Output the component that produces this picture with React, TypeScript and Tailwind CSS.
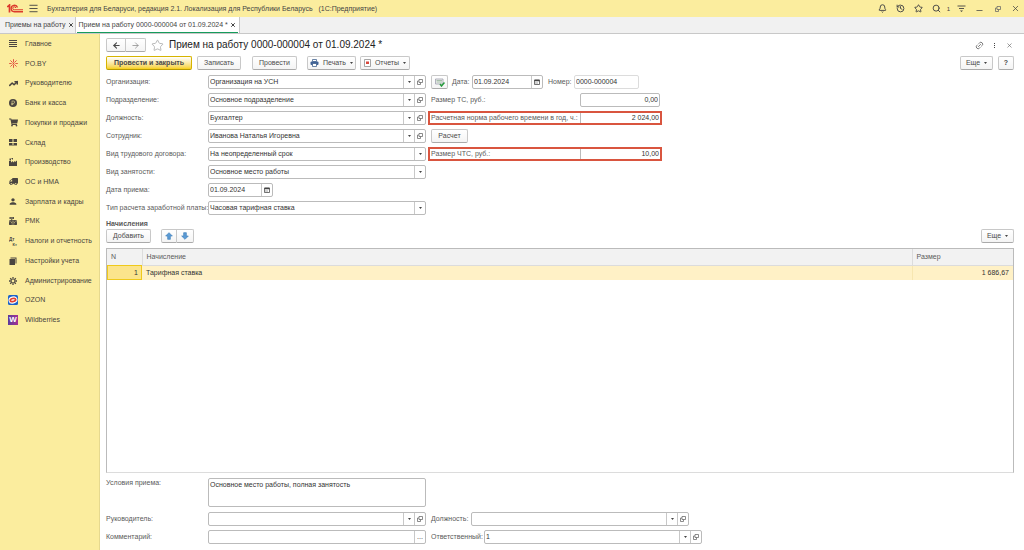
import type { ReactNode } from 'react'
import { Bell, History, Link2, Menu, Search, Star, X, ArrowLeft, ArrowRight, TrendingUp, Minus } from 'lucide-react'
import { FaCashRegister, FaShoppingCart, FaTruck } from 'react-icons/fa'
import { MdCurrencyRuble, MdPerson } from 'react-icons/md'
import clsx from 'clsx'

const menu: { title: string; icon: ReactNode }[] = [
  { title: 'Главное', icon: <LinesIcon /> },
  { title: 'PO.BY', icon: <BurstIcon /> },
  { title: 'Руководителю', icon: <TrendingUp className="size-[9px]" strokeWidth={4} /> },
  {
    title: 'Банк и касса',
    icon: (
      <span className="flex size-2 items-center justify-center rounded-full bg-[#4a4540]">
        <MdCurrencyRuble className="size-[6px] text-[#fbed9e]" />
      </span>
    ),
  },
  { title: 'Покупки и продажи', icon: <FaShoppingCart className="size-[9px]" /> },
  { title: 'Склад', icon: <StockIcon /> },
  { title: 'Производство', icon: <FactoryIcon /> },
  { title: 'ОС и НМА', icon: <FaTruck className="size-[9px] -scale-x-100" /> },
  { title: 'Зарплата и кадры', icon: <MdPerson className="size-[11px]" /> },
  { title: 'РМК', icon: <FaCashRegister className="size-2" /> },
  { title: 'Налоги и отчетность', icon: <DebitCreditIcon /> },
  { title: 'Настройки учета', icon: <BooksIcon /> },
  { title: 'Администрирование', icon: <GearIcon /> },
  { title: 'OZON', icon: <OzonIcon /> },
  { title: 'Wildberries', icon: <WildberriesIcon /> },
]

function LinesIcon() {
  return (
    <svg viewBox="0 0 8 8" className="size-2" fill="currentColor">
      <path d="M0 0h8v1H0zM0 2h8v1H0zM0 4h8v1H0zM0 6h8v1H0z" />
    </svg>
  )
}

function BurstIcon() {
  return (
    <svg viewBox="0 0 16 16" className="size-[9px]" stroke="#e0453a" strokeWidth="1.6" strokeLinecap="round">
      <path d="M8 1v4M8 11v4M1 8h3M12 8h3M3 3l3 3M10 10l3 3M13 3l-3 3M6 10l-3 3" />
      <circle cx="8" cy="8" r="1.2" fill="#e0453a" stroke="none" />
    </svg>
  )
}

function StockIcon() {
  return (
    <svg viewBox="0 0 16 14" className="h-[7px] w-2" fill="currentColor">
      <path d="M0 0h7v6H0zM9 0h7v6H9zM0 8h7v4H0zM9 8h7v4H9zM0 13h16v1H0z" />
    </svg>
  )
}

function FactoryIcon() {
  return (
    <svg viewBox="0 0 16 16" className="size-2" fill="currentColor">
      <path d="M0 16V6h4v3l4-3v3l4-3v2l4-3v11zM1 1h3v4H1zM5 0h3v2H5zM6 3h2v1H6z" />
    </svg>
  )
}

function DebitCreditIcon() {
  return (
    <svg viewBox="0 0 18 18" className="size-[9px]" fill="currentColor">
      <text x="0" y="8" fontSize="9" fontWeight="700">Дт</text>
      <text x="7" y="17" fontSize="8" fontWeight="700">Кт</text>
    </svg>
  )
}

function BooksIcon() {
  return (
    <svg viewBox="0 0 16 16" className="size-2" fill="currentColor">
      <path d="M1 4h11v12H1zM3 1h12v12h-2V3H3z" />
    </svg>
  )
}

function GearIcon() {
  return (
    <svg viewBox="0 0 16 16" className="size-2" fill="none" stroke="currentColor">
      <circle cx="8" cy="8" r="4" strokeWidth="2.4" />
      <path strokeWidth="2.6" d="M8 0v3M8 13v3M0 8h3M13 8h3M2.4 2.4l2 2M11.6 11.6l2 2M13.6 2.4l-2 2M4.4 11.6l-2 2" />
    </svg>
  )
}

function OzonIcon() {
  return (
    <svg viewBox="0 0 20 20" className="size-[10px]">
      <rect width="20" height="20" rx="3" fill="#1c62c9" />
      <ellipse cx="10" cy="10" rx="9" ry="7" fill="#fff" transform="rotate(-15 10 10)" />
      <ellipse cx="10" cy="10" rx="5.5" ry="3" fill="none" stroke="#e2402f" strokeWidth="3.4" transform="rotate(-15 10 10)" />
    </svg>
  )
}

function WildberriesIcon() {
  return (
    <span className="flex size-[10px] items-center justify-center bg-linear-to-r from-[#5b3a9c] to-[#a52f93] text-[8px] font-bold text-white">
      W
    </span>
  )
}

function Logo() {
  return (
    <svg viewBox="0 0 32 18" className="h-[9px] w-4" fill="none" stroke="#dc3a2c">
      <path d="M0 5h2l3-3v15" strokeWidth="3.4" />
      <path d="M21 7a6.5 6.5 0 1 0-6.5 8.500H32" strokeWidth="2.8" />
      <path d="M17.500 8a3 3 0 1 0-3 3.500H32" strokeWidth="2" />
    </svg>
  )
}

function PrinterIcon() {
  return (
    <svg viewBox="0 0 18 16" className="h-2 w-[9px]">
      <path d="M5 1h8v4H5z" fill="#fff" stroke="#3b5c8a" strokeWidth="1.500" />
      <rect x="1" y="5" width="16" height="7" rx="2" fill="#3f6296" />
      <path d="M5 9h8v6H5z" fill="#fff" stroke="#3b5c8a" strokeWidth="1.500" />
    </svg>
  )
}

function ReportIcon() {
  return (
    <svg viewBox="0 0 14 16" className="h-2 w-[7px]">
      <path d="M1 1h12v14H1z" fill="#fff" stroke="#888" strokeWidth="1.500" />
      <path d="M4 5h6v5H4z" fill="#d8473c" />
    </svg>
  )
}

function PostedIcon() {
  return (
    <svg viewBox="0 0 20 18" className="h-[9px] w-[10px]">
      <path d="M1 2h15v10H1z" fill="#eef0ee" stroke="#99a" strokeWidth="1.500" />
      <path d="M3 5h11M3 8h11" stroke="#8fae93" strokeWidth="1.500" />
      <path d="M10 12l3 4 6-7" fill="none" stroke="#259b3c" strokeWidth="3" />
    </svg>
  )
}

function CalendarIcon() {
  return (
    <svg viewBox="0 0 12 12" className="size-[6px]" fill="none" stroke="#444">
      <path d="M1 2h10v9H1z" strokeWidth="1.500" />
      <path d="M1 3h10" strokeWidth="3" />
      <path d="M3 7h6M3 9h6" strokeDasharray="1 1" />
    </svg>
  )
}

function OpenIcon() {
  return (
    <svg viewBox="0 0 12 12" className="size-[6px]" fill="none" stroke="#666" strokeWidth="1.500">
      <path d="M4 1h7v6H4zM4 4H1v7h6V7" />
    </svg>
  )
}

function MoveArrow({ down }: { down?: boolean }) {
  return (
    <svg viewBox="0 0 12 12" className={clsx('size-2', down && 'rotate-180')}>
      <path d="M6 1l5 5H8v5H4V6H1z" fill="#5b9bd5" stroke="#3f80bb" />
    </svg>
  )
}

function Caret() {
  return (
    <svg viewBox="0 0 6 4" className="h-[2px] w-[3px] shrink-0" fill="#444">
      <path d="M0 0h6L3 4z" />
    </svg>
  )
}

function Button({ children, className, label }: { children: ReactNode; className?: string; label?: string }) {
  return (
    <button
      type="button"
      aria-label={label}
      className={clsx(
        'flex h-[14px] shrink-0 items-center justify-center gap-1 rounded-[2px] border border-[#c8c8c8] border-b-[#aaaaaa] bg-linear-to-b from-white to-[#f4f4f4] text-[#4a4a4a]',
        className,
      )}
    >
      {children}
    </button>
  )
}

const box = 'flex h-[14px] shrink-0 overflow-hidden rounded-[2px] border border-[#bbbbbb] bg-white text-[#333]'
const cell = 'flex w-[11px] shrink-0 items-center justify-center border-l border-[#c8c8c8]'

function Combo({ id, value, open, className }: { id: string; value: string; open?: boolean; className?: string }) {
  return (
    <div className={clsx(box, className)}>
      <div className="relative min-w-0 flex-1">
        <select id={id} defaultValue={value} className="block h-full w-full appearance-none pl-px outline-none">
          <option value={value}>{value}</option>
        </select>
        <span className={clsx(cell, 'pointer-events-none absolute inset-y-0 right-0')}>
          <Caret />
        </span>
      </div>
      {open && (
        <button type="button" aria-label="Открыть" className={cell}>
          <OpenIcon />
        </button>
      )}
    </div>
  )
}

function DateInput({ id, className }: { id: string; className?: string }) {
  return (
    <div className={clsx(box, className)}>
      <input id={id} defaultValue="01.09.2024" className="min-w-0 flex-1 pl-px outline-none" />
      <button type="button" aria-label="Выбрать дату" className={cell}>
        <CalendarIcon />
      </button>
    </div>
  )
}

function Row({ id, label, children }: { id: string; label: string; children: ReactNode }) {
  return (
    <div className="flex h-[14px] items-center">
      <label htmlFor={id} className="w-[102px] shrink-0 whitespace-nowrap">{label}</label>
      {children}
    </div>
  )
}

function Amount({ id, label, value, marked }: { id: string; label: string; value: string; marked?: boolean }) {
  return (
    <div
      className={clsx(
        '-ml-[3px] flex h-[14px] w-[234px] items-center border-2 pl-px',
        marked ? 'border-[#d9553f]' : 'border-transparent',
      )}
    >
      <label htmlFor={id} className="flex-1 whitespace-nowrap">{label}</label>
      <input
        id={id}
        defaultValue={value}
        className={clsx(
          'w-20 shrink-0 border-[#bbbbbb] pr-px text-right text-[#333] outline-none',
          marked ? 'h-[10px] border-l' : 'h-[14px] rounded-[2px] border pb-px',
        )}
      />
    </div>
  )
}

function TitleBar() {
  return (
    <header className="flex h-[17px] items-center bg-[#fbed9e] pr-1 pl-[7px] text-[#444]">
      <Logo />
      <button type="button" aria-label="Меню" className="ml-[5px]">
        <Menu className="size-[11px]" strokeWidth={2} />
      </button>
      <h1 className="ml-2 flex-1 whitespace-pre">
        Бухгалтерия для Беларуси, редакция 2.1. Локализация для Республики Беларусь   (1С:Предприятие)
      </h1>
      <div className="flex items-center gap-[9px]">
        <button type="button" aria-label="Уведомления"><Bell className="size-[9px]" strokeWidth={2.5} /></button>
        <button type="button" aria-label="История"><History className="size-[9px]" strokeWidth={2.5} /></button>
        <button type="button" aria-label="Избранное"><Star className="size-[9px]" strokeWidth={2.5} /></button>
        <button type="button" aria-label="Поиск"><Search className="size-[9px]" strokeWidth={2.5} /></button>
      </div>
      <span className="ml-[6px] text-[6px]">1</span>
      <button type="button" aria-label="Настройки" className="ml-[7px]">
        <svg viewBox="0 0 18 18" className="size-[9px]" fill="none" stroke="currentColor" strokeWidth="1.800">
          <path d="M1 4h16M4 9h10" />
          <path d="M6 13h6l-3 3z" fill="currentColor" stroke="none" />
        </svg>
      </button>
      <div className="ml-[9px] flex items-center gap-[9px]">
        <button type="button" aria-label="Свернуть"><Minus className="size-[9px] translate-y-[2px]" /></button>
        <button type="button" aria-label="Развернуть" className="flex size-[9px] items-center justify-center"><OpenIcon /></button>
        <button type="button" aria-label="Закрыть"><X className="size-[9px]" /></button>
      </div>
    </header>
  )
}

function Tabs() {
  return (
    <nav className="flex h-[17px] border-b border-[#c8c8c8] bg-[#f1f1f1] text-[#444]">
      <div className="flex items-center gap-[2px] border-r border-[#c8c8c8] pr-px pl-[5px]">
        <a href="#list">Приемы на работу</a>
        <button type="button" aria-label="Закрыть"><X className="size-[6px]" strokeWidth={4} /></button>
      </div>
      <div className="flex items-center border-r border-[#c8c8c8] bg-white px-px">
        <div className="flex h-[15px] items-center gap-[2px] border-b border-[#169c5c] px-[2px]">
          <a href="#doc">Прием на работу 0000-000004 от 01.09.2024 *</a>
          <button type="button" aria-label="Закрыть"><X className="size-[6px]" strokeWidth={4} /></button>
        </div>
      </div>
    </nav>
  )
}

function Sidebar() {
  return (
    <aside className="w-[100px] shrink-0 border-r border-[#e6d98f] bg-[#fbed9e]">
      <ul className="grid h-[296px] auto-rows-fr text-[#4a4540]">
        {menu.map((item) => (
          <li key={item.title}>
            <a href="#section" className="flex h-full items-center pl-2">
              <span className="flex w-[10px] shrink-0 justify-center">{item.icon}</span>
              <span className="ml-[7px] whitespace-nowrap">{item.title}</span>
            </a>
          </li>
        ))}
      </ul>
    </aside>
  )
}

export default function App() {
  return (
    <div className="flex min-h-screen flex-col bg-white font-['Liberation_Sans',Arial,sans-serif] text-[7px] leading-[10px] text-[#5a5a5a]">
      <TitleBar />
      <Tabs />
      <div className="flex flex-1">
        <Sidebar />
        <main className="flex min-w-0 flex-1 flex-col pt-1 pr-[10px] pb-[6px] pl-[6px]">
          <div className="flex h-[14px] items-center">
            <div className="flex">
              <Button label="Назад" className="w-5 rounded-r-none"><ArrowLeft className="size-[9px]" strokeWidth={3} /></Button>
              <Button label="Вперед" className="w-5 rounded-l-none border-l-0"><ArrowRight className="size-[9px] text-[#888]" /></Button>
            </div>
            <button type="button" aria-label="В избранное" className="ml-[5px]">
              <Star className="size-[13px] text-[#aaa]" strokeWidth={1.5} />
            </button>
            <h2 className="ml-[5px] flex-1 text-[10px] text-[#222]">Прием на работу 0000-000004 от 01.09.2024 *</h2>
            <button type="button" aria-label="Ссылка"><Link2 className="size-[9px] -rotate-45" /></button>
            <button type="button" aria-label="Еще" className="ml-2 flex w-[5px] flex-col items-center gap-px">
              <i className="size-px bg-[#444]" />
              <i className="size-px bg-[#444]" />
              <i className="size-px bg-[#444]" />
            </button>
            <button type="button" aria-label="Закрыть" className="mr-px ml-[9px]"><X className="size-[7px]" /></button>
          </div>

          <div className="mt-1 flex">
            <Button className="w-[86px] border-[#d6b400] border-b-[#b89a00] from-[#ffe11f] to-[#f7d000] font-bold">Провести и закрыть</Button>
            <Button className="ml-[5px] w-11">Записать</Button>
            <Button className="ml-[11px] w-[45px]">Провести</Button>
            <Button className="ml-[10px] w-[49px]"><PrinterIcon />Печать<Caret /></Button>
            <Button className="ml-1 w-[50px]"><ReportIcon />Отчеты<Caret /></Button>
            <Button className="ml-auto w-[33px]">Еще<Caret /></Button>
            <Button className="ml-[5px] w-4 font-bold">?</Button>
          </div>

          <div className="mt-[5px] flex gap-[5px]">
            <div className="flex flex-col gap-1">
              <Row id="org" label="Организация:"><Combo id="org" value="Организация на УСН" open className="w-[218px]" /></Row>
              <Row id="dep" label="Подразделение:"><Combo id="dep" value="Основное подразделение" open className="w-[218px]" /></Row>
              <Row id="pos" label="Должность:"><Combo id="pos" value="Бухгалтер" open className="w-[218px]" /></Row>
              <Row id="emp" label="Сотрудник:"><Combo id="emp" value="Иванова Наталья Игоревна" open className="w-[218px]" /></Row>
              <Row id="contract" label="Вид трудового договора:"><Combo id="contract" value="На неопределенный срок" className="w-[218px]" /></Row>
              <Row id="kind" label="Вид занятости:"><Combo id="kind" value="Основное место работы" className="w-[218px]" /></Row>
              <Row id="hired" label="Дата приема:"><DateInput id="hired" className="w-[65px]" /></Row>
              <Row id="calc" label="Тип расчета заработной платы:"><Combo id="calc" value="Часовая тарифная ставка" className="w-[218px]" /></Row>
            </div>
            <div className="flex flex-col gap-1">
              <div className="flex items-center">
                <Button label="Проведен" className="w-[17px]"><PostedIcon /></Button>
                <label htmlFor="date" className="ml-1 w-5">Дата:</label>
                <DateInput id="date" className="w-[71px]" />
                <label htmlFor="number" className="ml-[5px] w-[26px]">Номер:</label>
                <input id="number" defaultValue="0000-000004" className="h-[14px] w-[65px] rounded-[2px] border border-[#dcdcdc] pb-px pl-px text-[#333] outline-none" />
              </div>
              <Amount id="ts" label="Размер ТС, руб.:" value="0,00" />
              <Amount id="norm" label="Расчетная норма рабочего времени в год, ч.:" value="2 024,00" marked />
              <Button className="w-[37px]">Расчет</Button>
              <Amount id="chts" label="Размер ЧТС, руб.:" value="10,00" marked />
            </div>
          </div>

          <h3 className="mt-1 font-bold">Начисления</h3>
          <div className="flex">
            <Button className="w-[45px]">Добавить</Button>
            <Button label="Вверх" className="ml-[10px] w-4 rounded-r-none"><MoveArrow /></Button>
            <Button label="Вниз" className="w-[17px] rounded-l-none border-l-0"><MoveArrow down /></Button>
            <Button className="ml-auto w-[33px]">Еще<Caret /></Button>
          </div>

          <div className="mt-[5px] flex-1 border border-[#bbbbbb] border-b-[#dcdcdc]">
            <table className="w-full table-fixed border-collapse">
              <thead>
                <tr className="h-4 bg-[#f2f2f2] text-left">
                  <th className="w-[35px] border-r border-b border-[#dcdcdc] px-1 font-normal">N</th>
                  <th className="border-r border-b border-[#dcdcdc] px-1 font-normal">Начисление</th>
                  <th className="w-[101px] border-b border-[#dcdcdc] px-1 font-normal">Размер</th>
                </tr>
              </thead>
              <tbody>
                <tr className="h-[15px] bg-[#fff1c6] text-[#333]">
                  <td className="bg-[#fbe48c] px-1 text-right outline -outline-offset-1 outline-[#efc91c]">1</td>
                  <td className="border-r border-[#f7e6b0] px-1">Тарифная ставка</td>
                  <td className="px-1 text-right">1 686,67</td>
                </tr>
              </tbody>
            </table>
          </div>

          <div className="mt-[5px] flex">
            <label htmlFor="terms" className="w-[102px]">Условия приема:</label>
            <textarea
              id="terms"
              defaultValue="Основное место работы, полная занятость"
              className="h-[29px] w-[218px] resize-none rounded-[2px] border border-[#bbbbbb] px-px py-px text-[#333] outline-none"
            />
          </div>
          <div className="mt-[5px] flex items-center gap-[5px]">
            <Row id="head" label="Руководитель:"><Combo id="head" value="" open className="w-[218px]" /></Row>
            <label htmlFor="headPos" className="w-[35px]">Должность:</label>
            <Combo id="headPos" value="" open className="w-[218px]" />
          </div>
          <div className="mt-1 flex items-center gap-[5px]">
            <Row id="comment" label="Комментарий:">
              <div className={clsx(box, 'w-[218px]')}>
                <input id="comment" className="min-w-0 flex-1 pl-px outline-none" />
                <button type="button" aria-label="Выбрать" className={cell}>...</button>
              </div>
            </Row>
            <label htmlFor="resp" className="w-12">Ответственный:</label>
            <Combo id="resp" value="1" open className="w-[218px]" />
          </div>
        </main>
      </div>
    </div>
  )
}
